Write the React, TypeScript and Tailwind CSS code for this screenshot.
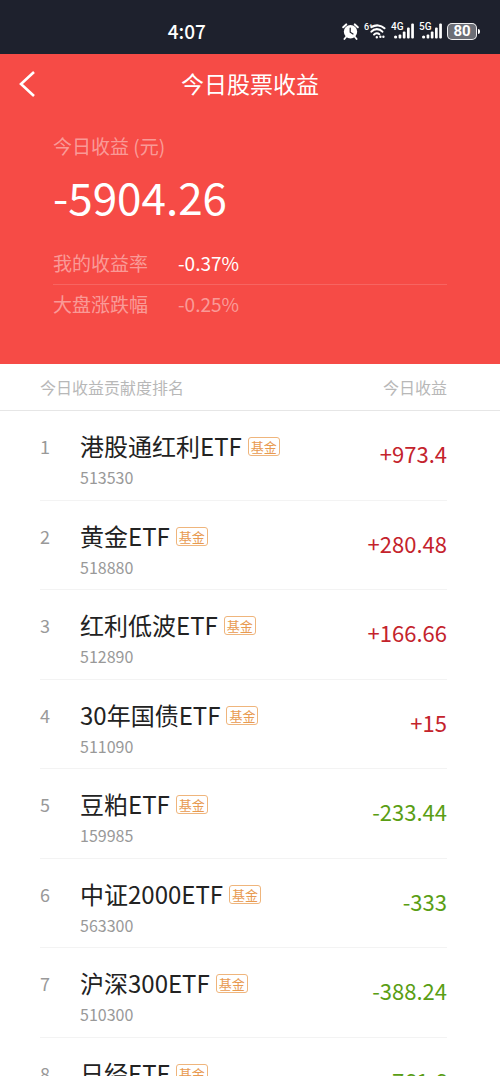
import React from "react";
import clsx from "clsx";

type Holding = {
  name: string;
  code: string;
  profit: string;
};

const holdings: Holding[] = [
  { name: "港股通红利ETF", code: "513530", profit: "+973.4" },
  { name: "黄金ETF", code: "518880", profit: "+280.48" },
  { name: "红利低波ETF", code: "512890", profit: "+166.66" },
  { name: "30年国债ETF", code: "511090", profit: "+15" },
  { name: "豆粕ETF", code: "159985", profit: "-233.44" },
  { name: "中证2000ETF", code: "563300", profit: "-333" },
  { name: "沪深300ETF", code: "510300", profit: "-388.24" },
  { name: "日经ETF", code: "513520", profit: "-761.6" },
];

function AlarmIcon() {
  return (
    <svg width="17" height="17" viewBox="0 0 17 17" fill="none" aria-hidden="true">
      <path d="M1.2 4.2 4.2 1.4M15.8 4.2l-3-2.8" stroke="white" strokeWidth="2" strokeLinecap="round" />
      <path d="m4 14-1.6 2M13 14l1.6 2" stroke="white" strokeWidth="1.8" strokeLinecap="round" />
      <circle cx="8.5" cy="8.8" r="6.7" fill="white" />
      <path d="M8.2 5.2v4l2.8 1.8" stroke="#1e212d" strokeWidth="1.2" strokeLinecap="round" />
    </svg>
  );
}

function WifiIcon() {
  return (
    <svg width="18" height="16" viewBox="0 0 18 16" fill="none" stroke="white" strokeLinecap="round" aria-hidden="true">
      <path d="M3.4 4.2a10.6 10.6 0 0 1 13.1 1" strokeWidth="2.1" />
      <path d="M3.4 8.6a7.4 7.4 0 0 1 11 0" strokeWidth="2.1" />
      <path d="M6 11.6a3.9 3.9 0 0 1 5.4-.4" strokeWidth="2" />
      <path d="M8.8 14.2h.01M12.4 13.8h.01M15.4 13.8h.01" strokeWidth="2.4" />
    </svg>
  );
}

function SignalIcon({ label }: { label: string }) {
  return (
    <span className="relative block h-4 w-[23px]">
      <span className="absolute -top-px left-0 font-['Roboto',sans-serif] text-[10px] leading-[10px] font-medium">
        {label}
      </span>
      <svg className="block" width="23" height="16" viewBox="0 0 23 16" fill="white" aria-hidden="true">
        <circle cx="4.6" cy="14" r="1.6" />
        <rect x="7.6" y="11.5" width="2.7" height="4" rx="1" />
        <rect x="11.8" y="8.5" width="2.7" height="7" rx="1" />
        <rect x="16" y="4.5" width="2.7" height="11" rx="1" />
        <rect x="20.2" y="0.5" width="2.7" height="15" rx="1" />
      </svg>
    </span>
  );
}

function StatusBar() {
  return (
    <div className="grid h-[54px] shrink-0 grid-cols-3 items-center bg-[#1e212d] pt-2 text-white">
      <span className="col-start-2 pl-px text-[19px] leading-6 font-medium">4:07</span>
      <div className="flex items-center justify-end gap-[5px] pr-5">
        <AlarmIcon />
        <span className="relative block pl-1">
          <span className="absolute -top-px left-0 font-['Roboto',sans-serif] text-[9px] leading-[10px] font-medium">
            6⁺
          </span>
          <WifiIcon />
        </span>
        <SignalIcon label="4G" />
        <SignalIcon label="5G" />
        <div className="flex items-center gap-px">
          <span className="flex h-[17px] w-[30px] items-center justify-center rounded-[5px] border border-white/90 bg-white/35 font-['Roboto',sans-serif] text-[15px] leading-4 font-bold">
            80
          </span>
          <span className="h-[5px] w-0.5 rounded-r-full bg-white" />
        </div>
      </div>
    </div>
  );
}

function Summary() {
  return (
    <header className="h-[310px] shrink-0 bg-[#f64b46] text-white">
      <div className="grid h-[60px] grid-cols-[1fr_auto_1fr] items-center">
        <button type="button" aria-label="返回" className="ml-4 flex size-8 items-center">
          <svg width="20" height="28" viewBox="0 0 20 28" fill="none" aria-hidden="true">
            <path d="M18 2 5 14l13 12" stroke="white" strokeWidth="2.6" />
          </svg>
        </button>
        <h1 className="pb-0.5 text-[23px] leading-8">今日股票收益</h1>
      </div>

      <div className="px-[53px]">
        <p className="pt-[18px] text-[19px] leading-7 text-white/45">今日收益 (元)</p>
        <p className="pt-2 text-[44px] leading-[56px]">-5904.26</p>
        <dl className="pt-[18px] text-[19px] leading-7">
          <div className="flex h-[43px] items-center border-b border-white/15">
            <dt className="w-[125px] text-white/45">我的收益率</dt>
            <dd>-0.37%</dd>
          </div>
          <div className="flex h-[38px] items-center text-white/45">
            <dt className="w-[125px]">大盘涨跌幅</dt>
            <dd>-0.25%</dd>
          </div>
        </dl>
      </div>
    </header>
  );
}

function HoldingRow({ rank, item }: { rank: number; item: Holding }) {
  // cell content carries the divider so it stays inset from the screen edges
  const cell = clsx("border-b border-[#f3f3f3]", rank % 2 ? "h-[90px]" : "h-[89px]");

  return (
    <tr>
      <td className="w-20 p-0 pl-10">
        <div className={clsx(cell, "pt-[19px] text-[18px] leading-8 text-[#999999]")}>{rank}</div>
      </td>
      <td className="p-0">
        <div className={clsx(cell, "pt-[19px]")}>
          <div className="flex items-center gap-[6px]">
            <span className="text-2xl leading-8 text-[#222222]">{item.name}</span>
            <span className="mt-0.5 rounded-[3px] border border-[#efb57c] px-[2px] text-[13px] leading-[17px] text-[#e89a50]">
              基金
            </span>
          </div>
          <div className="pt-[5px] text-base leading-5 text-[#999999]">{item.code}</div>
        </div>
      </td>
      <td className="p-0 pr-[53px]">
        <div
          className={clsx(
            cell,
            "flex items-center justify-end pb-1 text-[22px] leading-8",
            item.profit.startsWith("+") ? "text-[#c4232c]" : "text-[#5a9e14]",
          )}
        >
          {item.profit}
        </div>
      </td>
    </tr>
  );
}

export default function App() {
  return (
    <div className="flex h-screen flex-col bg-white font-['Noto_Sans_CJK_SC',sans-serif]">
      <StatusBar />
      <Summary />
      <main className="min-h-0 flex-1 overflow-y-auto [scrollbar-width:none]">
        <table className="w-full border-collapse">
          <thead>
            <tr className="h-[46px] border-b border-[#e6e6e6] text-base text-[#b8b8b8]">
              <th colSpan={2} className="p-0 pl-10 text-left font-normal">
                今日收益贡献度排名
              </th>
              <th className="p-0 pr-[53px] text-right font-normal">今日收益</th>
            </tr>
          </thead>
          <tbody>
            {holdings.map((item, i) => (
              <HoldingRow key={item.code} rank={i + 1} item={item} />
            ))}
          </tbody>
        </table>
      </main>
    </div>
  );
}
